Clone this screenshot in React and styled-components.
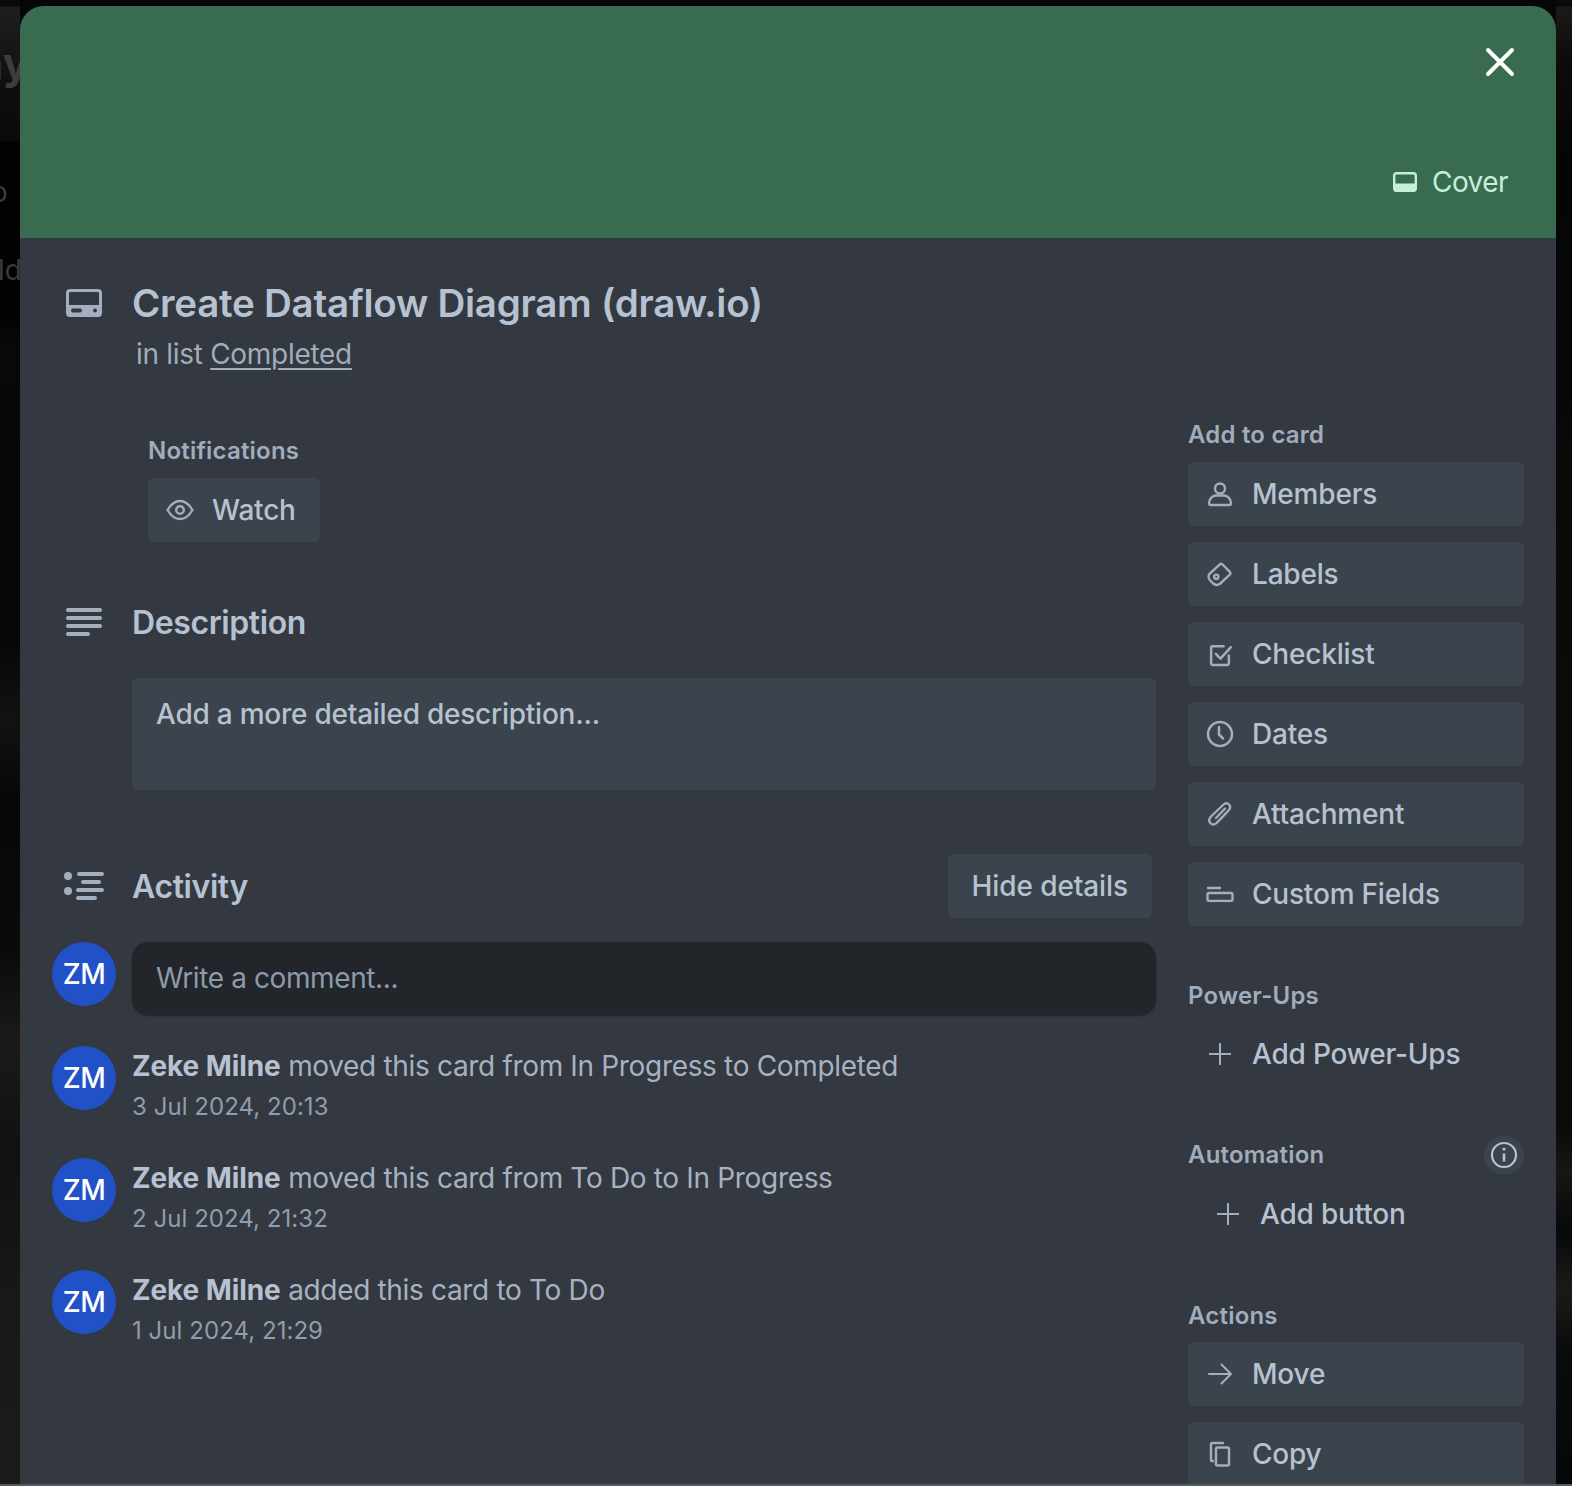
import React from 'react'
import styled, { createGlobalStyle } from 'styled-components'

const GlobalStyle = createGlobalStyle`
  html, body {
    margin: 0;
    padding: 0;
    background: #060707;
  }
  * { box-sizing: border-box; }
`

const Page = styled.div`
  position: relative;
  width: 1572px;
  height: 1486px;
  overflow: hidden;
  padding: 6px 16px 0 20px;
  font-family: Inter, "Liberation Sans", sans-serif;
  background-color: #050606;
  background-repeat: no-repeat;
  background-image:
    linear-gradient(180deg, #0a0a0a 0, #0a0a0a 6px, #1e1e1e 7px, #0d0d0d 100px, #0a0b0b 140px, #020202 142px, #030303 320px, #070808 340px, #060707 640px, #121211 720px, #060707 800px, #0a0a09 950px, #1b1a18 1040px, #101110 1150px, #181816 1300px, #1b1b1a 1480px),
    linear-gradient(180deg, #0a0a0a 0, #0a0a0a 6px, #1b1a18 7px, #0c0c0b 60px, #040505 160px, #0a0a09 600px, #0b0b0a 1130px, #171716 1170px, #070808 1230px, #1a1a19 1290px, #0a0b0b 1350px, #060707 1480px);
  background-size: 20px 100%, 16px 100%;
  background-position: left top, right top;
`

const BackdropText = styled.span`
  position: absolute;
  left: ${p => p.$left}px;
  top: ${p => p.$top}px;
  font-size: ${p => p.$size}px;
  font-weight: ${p => p.$weight};
  line-height: 1;
  color: #3c3c3e;
  filter: blur(0.6px);
`

const BottomEdge = styled.div`
  position: absolute;
  left: 0;
  right: 0;
  bottom: 0;
  height: 2px;
  background: #55585c;
  z-index: 2;
`

const Modal = styled.div`
  position: relative;
  width: 1536px;
  height: 1480px;
  border-radius: 24px 24px 0 0;
  overflow: hidden;
  background: #343840;
`

const Cover = styled.div`
  height: 232px;
  display: flex;
  justify-content: flex-end;
  align-items: flex-end;
  padding: 0 48px 36px 0;
  background: #386b50;
`

const CoverButton = styled.div`
  display: flex;
  align-items: center;
  gap: 15px;
  height: 40px;
  font-size: 28px;
  letter-spacing: -0.55px;
  color: #c6eedb;
`

const CloseButton = styled.div`
  position: absolute;
  top: 36px;
  right: 36px;
  width: 40px;
  height: 40px;
  display: flex;
  align-items: center;
  justify-content: center;
`

const Body = styled.div`
  padding: 41px 32px 0;
`

const TitleRow = styled.div`
  display: flex;
  align-items: center;
  gap: 16px;
`

const Gutter = styled.div`
  width: 64px;
  flex: none;
  display: flex;
  justify-content: center;
  align-items: center;
  color: #a3afbe;
`

const Title = styled.h1`
  margin: 0;
  font-size: 38.5px;
  line-height: 48px;
  font-weight: 600;
  letter-spacing: -0.25px;
  color: #b6c2d1;
`

const InList = styled.div`
  margin: 7px 0 0 84px;
  font-size: 28px;
  line-height: 40px;
  letter-spacing: -0.3px;
  color: #9fadbc;

  a {
    color: inherit;
    text-decoration: underline;
    text-underline-offset: 4px;
    text-decoration-thickness: 1.5px;
  }
`

const Columns = styled.div`
  display: flex;
  gap: 32px;
  margin-top: 44px;
`

const Main = styled.div`
  width: 1104px;
  flex: none;
`

const Sidebar = styled.div`
  width: 336px;
  flex: none;
`

const Notifications = styled.div`
  margin: 17px 0 0 96px;
`

const SmallLabel = styled.div`
  font-size: 24px;
  line-height: 32px;
  font-weight: 600;
  letter-spacing: 0.2px;
  color: #9fadbc;
`

const ActionButton = styled.div`
  display: flex;
  align-items: center;
  gap: 16px;
  height: 64px;
  padding: 0 24px 0 16px;
  border-radius: 6px;
  background: #3b444c;
  font-size: 28px;
  font-weight: 500;
  letter-spacing: -0.2px;
  color: #b6c2d1;
`

const WatchButton = styled(ActionButton)`
  display: inline-flex;
  margin-top: 11px;
  width: 172px;
`

const GhostButton = styled(ActionButton)`
  background: transparent;
  margin-top: 11px;
  padding-left: ${p => (p.$indent ? 24 : 16)}px;
`

const IconBox = styled.span`
  width: 32px;
  height: 32px;
  flex: none;
  display: flex;
  align-items: center;
  justify-content: center;
  color: #a3afbe;
`

const ButtonStack = styled.div`
  display: flex;
  flex-direction: column;
  gap: 16px;
  margin-top: 11px;
`

const SideLabelRow = styled.div`
  display: flex;
  align-items: center;
  justify-content: space-between;
  height: 32px;
  padding-top: ${p => (p.$low ? 2 : 0)}px;
  margin-top: ${p => p.$top ?? 53}px;
`

const InfoDot = styled.div`
  width: 40px;
  height: 40px;
  border-radius: 50%;
  background: #3b434c;
  display: flex;
  align-items: center;
  justify-content: center;
  color: #b6c2cf;
`

const SectionHead = styled.div`
  display: flex;
  align-items: center;
  gap: 16px;
  margin-top: ${p => p.$top}px;
`

const SectionTitle = styled.h2`
  margin: 0;
  flex: 1;
  padding-top: 2px;
  font-size: 32px;
  line-height: 46px;
  font-weight: 600;
  letter-spacing: -0.4px;
  color: #b6c2d1;
`

const HideButton = styled.div`
  display: flex;
  align-items: center;
  height: 64px;
  padding: 0 24px;
  margin-right: 4px;
  border-radius: 6px;
  background: #3b444c;
  font-size: 28px;
  font-weight: 500;
  letter-spacing: -0.1px;
  color: #b6c2d1;
`

const DescriptionBox = styled.div`
  margin: 32px 0 0 80px;
  width: 1024px;
  height: 112px;
  padding: 16px 24px;
  border-radius: 6px;
  background: #3b444c;
  font-size: 28px;
  line-height: 40px;
  font-weight: 500;
  letter-spacing: -0.24px;
  color: #b6c2d1;
`

const Row = styled.div`
  display: flex;
  gap: 16px;
  margin-top: ${p => p.$top}px;
`

const Avatar = styled.div`
  width: 64px;
  height: 64px;
  flex: none;
  border-radius: 50%;
  background: #2151c6;
  display: flex;
  align-items: center;
  justify-content: center;
  font-size: 28px;
  font-weight: 500;
  letter-spacing: -0.4px;
  color: #fff;
`

const CommentBox = styled.div`
  width: 1024px;
  height: 72px;
  padding: 0 24px;
  display: flex;
  align-items: center;
  border-radius: 16px;
  background: #22262a;
  box-shadow: 0 2px 2px rgba(0, 0, 0, 0.35);
  font-size: 28px;
  letter-spacing: -0.39px;
  color: #8c9bab;
`

const ActivityText = styled.div`
  font-size: 28px;
  line-height: 40px;
  letter-spacing: -0.33px;
  color: #a6b2c1;

  b {
    font-weight: 700;
    letter-spacing: -0.1px;
    color: #b6c2d1;
  }
`

const ActivityTime = styled.div`
  height: 40px;
  padding-top: 1px;
  font-size: 24px;
  line-height: 40px;
  letter-spacing: 0.05px;
  color: #8f9dad;
`

const Icon = ({ w = 24, h = 24, box, children, ...rest }) => (
  <svg width={w} height={h} viewBox={box || `0 0 ${w} ${h}`} fill="none" stroke="currentColor" strokeWidth="2.4" strokeLinecap="round" strokeLinejoin="round" {...rest}>
    {children}
  </svg>
)

const icons = {
  members: (
    <Icon w={26} h={26}>
      <circle cx="13" cy="7.500" r="5" />
      <path d="M2 22c0-5 4.500-7.500 7-7.500h8c2.500 0 7 2.500 7 7.500 0 1-.6 2-2 2H4c-1.400 0-2-1-2-2z" />
    </Icon>
  ),
  labels: (
    <Icon w={26} h={26} box="0 0 28 28" strokeWidth="2.600">
      <path d="M3 13.500L14 3.500c.8-.7 1.800-.7 2.500 0l8.300 8.500c.7.700.7 1.700 0 2.300L14 24.500c-2.500 1.700-5.500 1.500-7.500-.3L3.500 21c-2.200-2.200-2.500-5.300-.5-7.500z" />
      <circle cx="10" cy="17" r="2.300" strokeWidth="2.600" />
    </Icon>
  ),
  checklist: (
    <Icon w={25} h={25} box="0 0 24 24">
      <path d="M20 13v7.500c0 1-.6 1.500-1.500 1.500H4.500C3.600 22 3 21.500 3 20.500v-15C3 4.600 3.600 4 4.500 4H15" />
      <path d="M7.500 11.500l4.500 4.500 10-11" />
    </Icon>
  ),
  dates: (
    <Icon w={28} h={28} strokeWidth="2.500">
      <circle cx="14" cy="14" r="12" />
      <path d="M13 7v7.500l4 4" />
    </Icon>
  ),
  attachment: (
    <Icon w={26} h={26} strokeWidth="2.300">
      <path d="M10 21.500l11.500-12c2-2.200 2-4.500.5-6-1.600-1.600-4-1.400-6 .5L4 15.500c-2.200 2.400-2.200 5-.5 6.700 1.800 1.800 4.500 1.600 6.800-.7l10-10.500" />
      <path d="M9 17l9-9.500" />
    </Icon>
  ),
  fields: (
    <Icon w={28} h={16} box="0 0 28 16">
      <path d="M2 2h12" />
      <rect x="1.500" y="7" width="25" height="8" rx="1.500" />
    </Icon>
  ),
  plus: (
    <Icon w={24} h={24} strokeWidth="2" strokeLinecap="butt">
      <path d="M12 1v22M1 12h22" />
    </Icon>
  ),
  move: (
    <Icon w={24} h={22} strokeWidth="2">
      <path d="M1 11h22M13.500 1.500L23 11l-9.500 9.500" />
    </Icon>
  ),
  copy: (
    <Icon w={22} h={26}>
      <path d="M4 20H3c-.8 0-1-.5-1-1V3c0-.8.400-1 1-1h11" />
      <rect x="7" y="6.500" width="13" height="18" rx="1.500" />
    </Icon>
  ),
}

function SideButton({ icon, children }) {
  return (
    <ActionButton>
      <IconBox>{icons[icon]}</IconBox>
      {children}
    </ActionButton>
  )
}

const activity = [
  { text: 'moved this card from In Progress to Completed', time: '3 Jul 2024, 20:13' },
  { text: 'moved this card from To Do to In Progress', time: '2 Jul 2024, 21:32' },
  { text: 'added this card to To Do', time: '1 Jul 2024, 21:29' },
]

export default function App() {
  return (
    <Page>
      <GlobalStyle />
      <BackdropText $left={-24} $top={41} $size={44} $weight={700}>ny</BackdropText>
      <BackdropText $left={-9} $top={178} $size={28} $weight={400}>o</BackdropText>
      <BackdropText $left={-2} $top={256} $size={28} $weight={400}>ld</BackdropText>
      <BottomEdge />

      <Modal>
        <Cover>
          <CoverButton>
            <svg width="24" height="20" viewBox="0 0 24 20" fill="none">
              <rect x="1.200" y="1.200" width="21.600" height="17.600" rx="2.500" stroke="currentColor" strokeWidth="2.400" />
              <path d="M1 11.500h22v6c0 1.500-1 2.500-2.500 2.500h-17C2 20 1 19 1 17.500z" fill="currentColor" />
            </svg>
            Cover
          </CoverButton>
        </Cover>
        <CloseButton>
          <svg width="30" height="30" viewBox="0 0 30 30" fill="none" stroke="#fff" strokeWidth="4" strokeLinecap="round">
            <path d="M3 3l24 24M27 3L3 27" />
          </svg>
        </CloseButton>

        <Body>
          <TitleRow>
            <Gutter>
              <svg width="36" height="28" viewBox="0 0 36 28" fill="none">
                <rect x="1.500" y="1.500" width="33" height="25" rx="2.500" stroke="currentColor" strokeWidth="3" />
                <path d="M1 16h34v9c0 1.500-1 3-3 3H4c-2 0-3-1.500-3-3z" fill="currentColor" />
                <rect x="5" y="19.500" width="11" height="4" rx="2" fill="#343840" />
                <circle cx="29" cy="21.500" r="2" fill="#343840" />
              </svg>
            </Gutter>
            <Title>Create Dataflow Diagram (draw.io)</Title>
          </TitleRow>
          <InList>in list <a>Completed</a></InList>

          <Columns>
            <Main>
              <Notifications>
                <SmallLabel>Notifications</SmallLabel>
                <WatchButton>
                  <IconBox>
                    <Icon w={28} h={22} strokeWidth="2.300">
                      <path d="M1.500 11C5 5 9 2 14 2s9 3 12.500 9C23 17 19 20 14 20S5 17 1.500 11z" />
                      <circle cx="14" cy="11" r="3.800" strokeWidth="2.400" />
                    </Icon>
                  </IconBox>
                  Watch
                </WatchButton>
              </Notifications>

              <SectionHead $top={56}>
                <Gutter>
                  <svg width="36" height="28" viewBox="0 0 36 28" fill="currentColor">
                    <rect y="0" width="36" height="4" rx="2" />
                    <rect y="8" width="36" height="4" rx="2" />
                    <rect y="16" width="36" height="4" rx="2" />
                    <rect y="24" width="24" height="4" rx="2" />
                  </svg>
                </Gutter>
                <SectionTitle>Description</SectionTitle>
              </SectionHead>
              <DescriptionBox>Add a more detailed description...</DescriptionBox>

              <SectionHead $top={64}>
                <Gutter>
                  <svg width="40" height="28" viewBox="0 0 40 28" fill="currentColor">
                    <circle cx="4" cy="4" r="4" />
                    <circle cx="4" cy="19" r="4" />
                    <rect x="13" y="0" width="27" height="4" rx="2" />
                    <rect x="17" y="8" width="20" height="4" rx="2" />
                    <rect x="12" y="16" width="28" height="4" rx="2" />
                    <rect x="12" y="24" width="21" height="4" rx="2" />
                  </svg>
                </Gutter>
                <SectionTitle>Activity</SectionTitle>
                <HideButton>Hide details</HideButton>
              </SectionHead>

              <Row $top={24}>
                <Avatar>ZM</Avatar>
                <CommentBox>Write a comment...</CommentBox>
              </Row>

              {activity.map((item, index) => (
                <Row key={index} $top={32}>
                  <Avatar>ZM</Avatar>
                  <div>
                    <ActivityText><b>Zeke Milne</b> {item.text}</ActivityText>
                    <ActivityTime>{item.time}</ActivityTime>
                  </div>
                </Row>
              ))}
            </Main>

            <Sidebar>
              <SideLabelRow $top={1}>
                <SmallLabel>Add to card</SmallLabel>
              </SideLabelRow>
              <ButtonStack>
                <SideButton icon="members">Members</SideButton>
                <SideButton icon="labels">Labels</SideButton>
                <SideButton icon="checklist">Checklist</SideButton>
                <SideButton icon="dates">Dates</SideButton>
                <SideButton icon="attachment">Attachment</SideButton>
                <SideButton icon="fields">Custom Fields</SideButton>
              </ButtonStack>

              <SideLabelRow $low>
                <SmallLabel>Power-Ups</SmallLabel>
              </SideLabelRow>
              <GhostButton>
                <IconBox>{icons.plus}</IconBox>
                Add Power-Ups
              </GhostButton>

              <SideLabelRow>
                <SmallLabel>Automation</SmallLabel>
                <InfoDot>
                  <svg width="28" height="28" viewBox="0 0 28 28" fill="none" stroke="currentColor" strokeWidth="2.200">
                    <circle cx="14" cy="14" r="12" />
                    <path d="M14 12.500v8" strokeWidth="2.600" />
                    <circle cx="14" cy="8" r="1.600" fill="currentColor" stroke="none" />
                  </svg>
                </InfoDot>
              </SideLabelRow>
              <GhostButton $indent>
                <IconBox>{icons.plus}</IconBox>
                Add button
              </GhostButton>

              <SideLabelRow $low>
                <SmallLabel>Actions</SmallLabel>
              </SideLabelRow>
              <ButtonStack>
                <SideButton icon="move">Move</SideButton>
                <SideButton icon="copy">Copy</SideButton>
              </ButtonStack>
            </Sidebar>
          </Columns>
        </Body>
      </Modal>
    </Page>
  )
}
